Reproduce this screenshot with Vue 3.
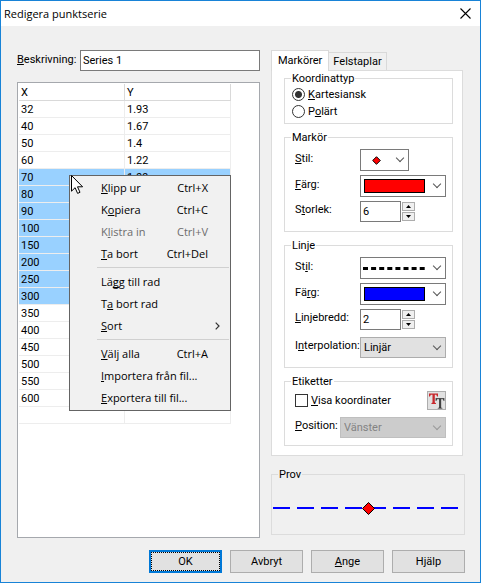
<script setup>
import { ref } from 'vue'

const description = ref('Series 1')
const coordType = ref('cartesian')
const markerSize = ref(6)
const lineWidth = ref(2)
const showCoords = ref(false)

const rows = [
  [32, 1.93], [40, 1.67], [50, 1.4], [60, 1.22],
  [70, 1.09, true], [80, '', true], [90, '', true], [100, '', true],
  [150, '', true], [200, '', true], [250, '', true], [300, '', true],
  [350, ''], [400, ''], [450, ''], [500, ''], [550, ''], [600, ''], ['', '']
]

// Each label is split around its access key.
const menu = [
  { a: '', k: 'K', b: 'lipp ur', keys: 'Ctrl+X' },
  { a: 'K', k: 'o', b: 'piera', keys: 'Ctrl+C' },
  { a: 'K', k: 'l', b: 'istra in', keys: 'Ctrl+V', off: true },
  { a: '', k: 'T', b: 'a bort', keys: 'Ctrl+Del' },
  { sep: true },
  { a: 'Lä', k: 'g', b: 'g till rad' },
  { a: 'T', k: 'a', b: ' bort rad' },
  { a: '', k: 'S', b: 'ort', sub: true },
  { sep: true },
  { a: '', k: 'V', b: 'älj alla', keys: 'Ctrl+A' },
  { a: '', k: 'I', b: 'mportera från fil...' },
  { a: '', k: 'E', b: 'xportera till fil...' }
]

const dashes = [1, 25, 49, 73, 97, 121, 145, 169]
</script>

<template>
  <div class="dialog">
    <header class="titlebar">
      <h1>Redigera punktserie</h1>
      <button class="close" type="button" aria-label="Stäng">
        <svg width="11" height="11" viewBox="0 0 11 11"><path d="M.5 .5 10.5 10.5M10.5 .5 .5 10.5" fill="none" stroke="#000" stroke-width="1.1" /></svg>
      </button>
    </header>

    <main class="content">
      <section class="left">
        <div class="desc">
          <label for="desc"><u>B</u>eskrivning:</label>
          <input id="desc" v-model="description" class="text" type="text">
        </div>
        <div class="sheet">
          <table>
            <thead><tr><th>X</th><th>Y</th></tr></thead>
            <tbody>
              <tr v-for="(r, i) in rows" :key="i" :class="{ selected: r[2] }">
                <td>{{ r[0] }}</td><td>{{ r[1] }}</td>
              </tr>
            </tbody>
          </table>
          <ul class="menu">
            <li v-for="(m, i) in menu" :key="i" :class="{ sep: m.sep }">
              <button v-if="!m.sep" type="button" :disabled="m.off">
                <span>{{ m.a }}<u>{{ m.k }}</u>{{ m.b }}</span>
                <span v-if="m.keys" class="keys">{{ m.keys }}</span>
                <svg v-if="m.sub" class="arrow" width="5" height="8" viewBox="0 0 5 8"><path d="M.7 .7 4 4 .7 7.3" fill="none" stroke="#333" stroke-width="1.2" /></svg>
              </button>
            </li>
          </ul>
          <svg class="pointer" width="13" height="20" viewBox="0 0 13 20"><path d="M.5 .5V16.2L4.1 12.7 6.6 18.4 9 17.3 6.5 11.8H11.6Z" fill="#fff" stroke="#000" /></svg>
        </div>
      </section>

      <section class="right">
        <div class="tabs">
          <button class="tab active" type="button">Markörer</button>
          <button class="tab" type="button">Felstaplar</button>
        </div>
        <div class="panel">
          <fieldset class="coords">
            <legend>Koordinattyp</legend>
            <label class="radio"><input v-model="coordType" type="radio" name="coord" value="cartesian"><span><u>K</u>artesiansk</span></label>
            <label class="radio"><input v-model="coordType" type="radio" name="coord" value="polar"><span>P<u>o</u>lärt</span></label>
          </fieldset>

          <fieldset>
            <legend>Markör</legend>
            <div class="row">
              <label for="mstyle"><u>S</u>til:</label>
              <div class="combo small">
                <select id="mstyle"><option>Romb</option></select>
                <svg class="sample" width="9" height="9" viewBox="0 0 9 9"><path d="M4.5 .7 8.3 4.5 4.5 8.3 .7 4.5Z" fill="red" stroke="#000" /></svg>
              </div>
            </div>
            <div class="row">
              <label for="mcolor"><u>F</u>ärg:</label>
              <div class="combo">
                <select id="mcolor"><option>Röd</option></select>
                <span class="swatch red"></span>
              </div>
            </div>
            <div class="row">
              <label for="msize">S<u>t</u>orlek:</label>
              <div class="spin">
                <input id="msize" v-model.number="markerSize" class="text" type="text">
                <div class="arrows">
                  <button type="button" aria-label="Öka" @click="markerSize++"><svg width="5" height="3" viewBox="0 0 5 3"><path d="M0 3 2.5 0 5 3Z" /></svg></button>
                  <button type="button" aria-label="Minska" @click="markerSize--"><svg width="5" height="3" viewBox="0 0 5 3"><path d="M0 0 2.5 3 5 0Z" /></svg></button>
                </div>
              </div>
            </div>
          </fieldset>

          <fieldset>
            <legend>Linje</legend>
            <div class="row">
              <label for="lstyle">St<u>i</u>l:</label>
              <div class="combo">
                <select id="lstyle"><option>Streckad</option></select>
                <svg class="sample line" width="62" height="3" viewBox="0 0 62 3"><path d="M0 1.5H62" stroke="#000" stroke-width="3" stroke-dasharray="5 3.1" /></svg>
              </div>
            </div>
            <div class="row">
              <label for="lcolor">Fä<u>r</u>g:</label>
              <div class="combo">
                <select id="lcolor"><option>Blå</option></select>
                <span class="swatch blue"></span>
              </div>
            </div>
            <div class="row">
              <label for="lwidth"><u>L</u>injebredd:</label>
              <div class="spin">
                <input id="lwidth" v-model.number="lineWidth" class="text" type="text">
                <div class="arrows">
                  <button type="button" aria-label="Öka" @click="lineWidth++"><svg width="5" height="3" viewBox="0 0 5 3"><path d="M0 3 2.5 0 5 3Z" /></svg></button>
                  <button type="button" aria-label="Minska" @click="lineWidth--"><svg width="5" height="3" viewBox="0 0 5 3"><path d="M0 0 2.5 3 5 0Z" /></svg></button>
                </div>
              </div>
            </div>
            <div class="row spaced">
              <label for="interp">I<u>n</u>terpolation:</label>
              <div class="combo list">
                <select id="interp"><option>Linjär</option></select>
              </div>
            </div>
          </fieldset>

          <fieldset class="labels">
            <legend>Etiketter</legend>
            <div class="check-row">
              <label class="check"><input v-model="showCoords" type="checkbox"><span><u>V</u>isa koordinater</span></label>
              <button class="font" type="button" aria-label="Teckensnitt">
                <svg width="17" height="17" viewBox="0 0 17 17">
                  <path d="M1 1.5H10V4.5H9L8.3 2.7H6.8V10.6L8 11.3V12H3.4V11.3L4.5 10.6V2.7H2.8L2 4.5H1Z" fill="#c8282d" />
                  <path d="M7.5 6H16.5V9H15.5L14.8 7.2H13.2V15.4L14.4 16V16.7H9.8V16L11 15.4V7.2H9.2L8.5 9H7.5Z" fill="#333" stroke="#e1e1e1" stroke-width=".3" />
                </svg>
              </button>
            </div>
            <div class="row wide">
              <label for="pos"><u>P</u>osition:</label>
              <div class="combo list">
                <select id="pos" disabled><option>Vänster</option></select>
              </div>
            </div>
          </fieldset>
        </div>

        <fieldset class="preview">
          <legend>Prov</legend>
          <svg viewBox="0 0 192 53">
            <path v-for="x in dashes" :key="x" :d="`M${x} 27H${x + 17}`" stroke="#00f" stroke-width="2" />
            <path d="M96.5 21.5 102.5 27.5 96.5 33.5 90.5 27.5Z" fill="red" stroke="#000" />
          </svg>
        </fieldset>
      </section>
    </main>

    <footer class="actions">
      <button class="btn default" type="button"><span>OK</span></button>
      <button class="btn" type="button">Avbryt</button>
      <button class="btn" type="button"><u>A</u>nge</button>
      <button class="btn" type="button">Hjälp</button>
    </footer>
  </div>
</template>

<style>
body { margin: 0; }
</style>

<style scoped>
.dialog {
  box-sizing: border-box;
  display: flex;
  flex-direction: column;
  min-height: 100vh;
  border: 1px solid #1883d7;
  background: #f0f0f0;
  color: #000;
  font: 11px/16px "Roboto", "Liberation Sans", sans-serif;
}
.dialog *, .dialog *::before { box-sizing: border-box; }
button, input, select { margin: 0; font: inherit; color: inherit; border-radius: 0; }
button { padding: 0; }
u { text-underline-offset: 1px; text-decoration-thickness: 1px; text-decoration-skip-ink: none; }

.titlebar {
  display: flex;
  align-items: center;
  justify-content: space-between;
  height: 25px;
  padding: 0 9px 0 3px;
  background: #fff;
}
h1 { margin: 0; font: 11px/16px "Open Sans", sans-serif; }
.close { display: flex; border: 0; background: none; }

.content {
  flex: 1;
  display: grid;
  grid-template-columns: minmax(0, 243fr) minmax(0, 194fr);
  gap: 11px;
  padding: 24px 15px 0 16px;
}
.left { display: flex; flex-direction: column; gap: 11px; }
.desc { display: flex; align-items: center; }
.desc label { width: 63px; padding-bottom: 2px; white-space: nowrap; }
.text { width: 100%; height: 21px; min-width: 0; padding: 0 2px; border: 1px solid #7a7a7a; background: #fff; outline: 0; }
.desc .text { flex: 1; }

.sheet { position: relative; flex: 1; padding: 1px; border: 1px solid #a5a8ad; background: #fff; }
table { width: calc(100% - 27px); border-collapse: separate; border-spacing: 0; table-layout: fixed; }
th, td {
  height: 17px;
  padding: 1px 2px 0;
  border-right: 1px solid #ededed;
  border-bottom: 1px solid #ededed;
  font-weight: 400;
  line-height: 15px;
  text-align: left;
}
th { border-color: #d9d9d9; }
.selected td { background: #99d1ff; }

.menu {
  position: absolute;
  left: 51px;
  top: 92px;
  width: 162px;
  margin: 0;
  padding: 1px;
  border: 1px solid #646464;
  background: #f1f1f1;
  list-style: none;
  font: 11px/16px "Open Sans", sans-serif;
}
.menu button {
  display: flex;
  align-items: center;
  justify-content: space-between;
  width: 100%;
  height: 22px;
  padding: 0 21px 0 30px;
  border: 0;
  background: none;
  white-space: nowrap;
}
.menu button:disabled { color: #6d6d6d; }
.menu .arrow { margin-right: -12px; }
.menu .sep { height: 6px; padding: 2px 0 0 26px; }
.menu .sep::before { content: ""; display: block; height: 1px; background: #d0d0d0; }
.pointer { position: absolute; left: 53px; top: 92px; }

.right { display: flex; flex-direction: column; }
.tabs { display: flex; align-items: flex-end; height: 20px; }
.tab { height: 18px; padding: 0 4px; border: 1px solid #d9d9d9; border-width: 1px 1px 0 0; background: #f0f0f0; }
.tab.active { z-index: 1; height: 21px; margin-bottom: -1px; padding: 0 6px; border-left-width: 1px; background: #fff; }
.panel {
  display: flex;
  flex-direction: column;
  gap: 7px;
  margin-right: 2px;
  padding: 1px 9px 9px 12px;
  border: 1px solid #dcdcdc;
  background: #fff;
}
fieldset { min-width: 0; margin: 0; padding: 5px 6px 9px 10px; border: 1px solid #dcdcdc; }
legend { margin-left: -4px; padding: 0 1px; line-height: 13px; }
.coords { padding: 1px 7px 3px; }
.coords legend { margin-left: -1px; }
.radio { display: flex; align-items: center; gap: 3px; height: 17px; }
.radio input { appearance: none; width: 13px; height: 13px; border: 1px solid #333; border-radius: 50%; background: #fff; }
.radio input:checked { background: radial-gradient(circle, #333 0 3px, #fff 4px); }

.row { display: grid; grid-template-columns: 65px minmax(0, 1fr); align-items: center; }
.row + .row { margin-top: 4px; }
.row.spaced { margin-top: 7px; }
.row.wide { grid-template-columns: 45px minmax(0, 1fr); margin-top: 7px; }
.row label { padding-bottom: 3px; white-space: nowrap; }
.combo { position: relative; height: 22px; }
.combo.small { width: 49px; }
.combo select { appearance: none; display: block; width: 100%; height: 100%; padding: 0 3px; border: 1px solid #7a7a7a; background: #fff; color: transparent; outline: 0; }
.combo::after {
  content: "";
  position: absolute;
  right: 6px;
  top: 6px;
  width: 6px;
  height: 6px;
  box-sizing: border-box;
  border: solid #555;
  border-width: 0 1px 1px 0;
  transform: rotate(45deg);
  pointer-events: none;
}
.combo.list { height: 21px; }
.combo.list select { border-color: #adadad; background: #e1e1e1; color: #000; }
.combo.list select:disabled { border-color: #bfbfbf; background: #ccc; color: #838383; opacity: 1; }
.labels .combo::after { border-color: #999; }
.sample { position: absolute; left: 12px; top: 7px; pointer-events: none; }
.sample.line { left: 3px; top: 10px; }
.swatch { position: absolute; inset: 4px 21px 4px 4px; border: 1px solid #000; pointer-events: none; }
.red { background: #f00; }
.blue { background: #00f; }

.spin { display: flex; gap: 1px; }
.spin .text { width: 41px; }
.arrows { display: grid; gap: 1px; padding: 1px 0; }
.arrows button { display: flex; align-items: center; justify-content: center; width: 13px; height: 9px; border: 1px solid #adadad; background: #f0f0f0; }

.labels { padding: 3px 6px 7px 10px; }
.check-row { display: flex; align-items: center; justify-content: space-between; height: 19px; }
.check { display: flex; align-items: center; gap: 3px; white-space: nowrap; }
.check input { appearance: none; width: 13px; height: 13px; border: 1px solid #333; background: #fff; }
.check input:checked { background: #333; }
.font { display: flex; width: 19px; height: 19px; border: 1px solid #adadad; background: #e1e1e1; }

.preview { margin-top: 12px; padding: 0; }
.preview legend { margin-left: 6px; }
.preview svg { display: block; width: 100%; }

.actions { display: flex; justify-content: flex-end; gap: 8px; padding: 12px 15px 9px; }
.btn { width: 73px; height: 23px; border: 1px solid #adadad; background: #e1e1e1; }
.btn.default { padding: 0; border: 2px solid #0078d7; }
.btn.default span { display: block; height: 19px; border: 1px dotted #000; line-height: 17px; }
</style>
